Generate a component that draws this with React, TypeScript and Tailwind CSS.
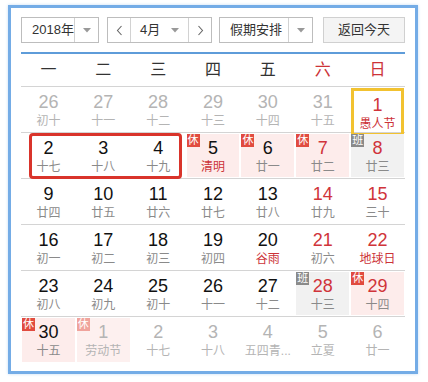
type Cell = {
  d: number;
  l: string;
  red?: boolean;
  lRed?: boolean;
  other?: boolean;
  tag?: '休' | '班';
  today?: boolean;
};

const ROWS: Cell[][] = [
  [
    { d: 26, l: '初十', other: true },
    { d: 27, l: '十一', other: true },
    { d: 28, l: '十二', other: true },
    { d: 29, l: '十三', other: true },
    { d: 30, l: '十四', other: true },
    { d: 31, l: '十五', other: true },
    { d: 1, l: '愚人节', red: true, lRed: true, today: true },
  ],
  [
    { d: 2, l: '十七' },
    { d: 3, l: '十八' },
    { d: 4, l: '十九' },
    { d: 5, l: '清明', lRed: true, tag: '休' },
    { d: 6, l: '廿一', tag: '休' },
    { d: 7, l: '廿二', red: true, tag: '休' },
    { d: 8, l: '廿三', red: true, tag: '班' },
  ],
  [
    { d: 9, l: '廿四' },
    { d: 10, l: '廿五' },
    { d: 11, l: '廿六' },
    { d: 12, l: '廿七' },
    { d: 13, l: '廿八' },
    { d: 14, l: '廿九', red: true },
    { d: 15, l: '三十', red: true },
  ],
  [
    { d: 16, l: '初一' },
    { d: 17, l: '初二' },
    { d: 18, l: '初三' },
    { d: 19, l: '初四' },
    { d: 20, l: '谷雨', lRed: true },
    { d: 21, l: '初六', red: true },
    { d: 22, l: '地球日', red: true, lRed: true },
  ],
  [
    { d: 23, l: '初八' },
    { d: 24, l: '初九' },
    { d: 25, l: '初十' },
    { d: 26, l: '十一' },
    { d: 27, l: '十二' },
    { d: 28, l: '十三', red: true, tag: '班' },
    { d: 29, l: '十四', red: true, tag: '休' },
  ],
  [
    { d: 30, l: '十五', tag: '休' },
    { d: 1, l: '劳动节', other: true, tag: '休' },
    { d: 2, l: '十七', other: true },
    { d: 3, l: '十八', other: true },
    { d: 4, l: '五四青...', other: true },
    { d: 5, l: '立夏', other: true },
    { d: 6, l: '廿一', other: true },
  ],
];

const WEEK = ['一', '二', '三', '四', '五', '六', '日'];

function Caret() {
  return (
    <svg width="8" height="5" viewBox="0 0 8 5">
      <path d="M0 0 L8 0 L4 4.5 Z" fill="#999" />
    </svg>
  );
}

function Chevron({ right }: { right?: boolean }) {
  return (
    <svg width="7" height="11" viewBox="0 0 7 11">
      <path d={right ? 'M1.5 1 L5.5 5.5 L1.5 10' : 'M5.5 1 L1.5 5.5 L5.5 10'} fill="none" stroke="#666" strokeWidth="1.1" />
    </svg>
  );
}

function DayCell({ c }: { c: Cell }) {
  const bg = c.tag === '休' ? (c.other ? 'bg-[#fdf0ef]' : 'bg-[#fdeceb]') : c.tag === '班' ? 'bg-[#f1f1f1]' : '';
  const num = c.other ? 'text-[#b4b4b4]' : c.red ? 'text-[#d0343a]' : 'text-[#111]';
  const lunar = c.other ? 'text-[#b4b4b4]' : c.lRed ? 'text-[#cc3338]' : 'text-[#8a8a8a]';
  const badge = c.tag === '休' ? (c.other ? 'bg-[#f0a39c]' : 'bg-[#e14b3f]') : 'bg-[#8a8a8a]';
  return (
    <div className="p-px h-full">
      <div
        className={`relative h-full flex flex-col items-center pt-[4px] ${bg} ${
          c.today ? 'border-[3px] border-[#f2c230] pt-[1px]' : ''
        }`}
      >
        {c.tag && (
          <span className={`absolute left-0 top-0 w-[13px] h-[13px] text-[11px] leading-[13px] text-white text-center ${badge}`}>
            {c.tag}
          </span>
        )}
        <span className={`text-[18px] leading-[21px] ${num}`}>{c.d}</span>
        <span className={`text-[12px] leading-[17px] whitespace-nowrap ${lunar}`}>{c.l}</span>
      </div>
    </div>
  );
}

export default function App() {
  return (
    <div className="min-h-screen bg-white pt-[5px] pl-[8px] font-['Liberation_Sans','Noto_Sans_CJK_SC',sans-serif]">
      <div className="w-[410px] border-[3px] border-[#74ace6] px-[10px] pt-[9px] pb-[8px] shadow-[0_0_3px_#c4dcf3]">
        {/* Controls */}
        <div className="flex h-[26px] text-[13px] text-[#333]">
          <div className="flex w-[78px] border border-[#bdbdbd]">
            <div className="flex-1 flex items-center pl-[10px]">2018年</div>
            <div className="w-[24px] border-l border-[#d2d2d2] flex items-center justify-center">
              <Caret />
            </div>
          </div>
          <div className="ml-[8px] flex w-[105px] border border-[#bdbdbd]">
            <div className="w-[22px] flex items-center justify-center">
              <Chevron />
            </div>
            <div className="flex-1 flex items-center border-x border-[#d2d2d2] pl-[9px] pr-[9px]">
              <span>4月</span>
              <span className="ml-auto flex">
                <Caret />
              </span>
            </div>
            <div className="w-[22px] flex items-center justify-center">
              <Chevron right />
            </div>
          </div>
          <div className="ml-[7px] flex w-[94px] border border-[#bdbdbd]">
            <div className="flex-1 flex items-center pl-[10px]">假期安排</div>
            <div className="w-[24px] border-l border-[#d2d2d2] flex items-center justify-center">
              <Caret />
            </div>
          </div>
          <div className="ml-[10px] w-[82px] border border-[#d0d0d0] bg-[#f4f4f4] flex items-center justify-center">
            返回今天
          </div>
        </div>

        <div className="mt-[9px] h-[2px] bg-[#5e9cd9]" />

        {/* Week header */}
        <div className="grid grid-cols-7 h-[33px] items-center border-b border-[#d4d4d4] text-[16px]">
          {WEEK.map((w, i) => (
            <div key={w} className={`text-center ${i >= 5 ? 'text-[#cc3338]' : 'text-[#333]'}`}>
              {w}
            </div>
          ))}
        </div>

        {/* Days */}
        {ROWS.map((row, ri) => (
          <div
            key={ri}
            className={`relative grid grid-cols-7 h-[46px] ${ri < ROWS.length - 1 ? 'border-b border-[#d4d4d4]' : ''}`}
          >
            {row.map((c, ci) => (
              <DayCell key={ci} c={c} />
            ))}
            {ri === 1 && (
              <div className="absolute left-[8px] top-0 w-[153px] h-[46px] border-[3px] border-[#d9342b] rounded-[4px]" />
            )}
          </div>
        ))}
      </div>
    </div>
  );
}
